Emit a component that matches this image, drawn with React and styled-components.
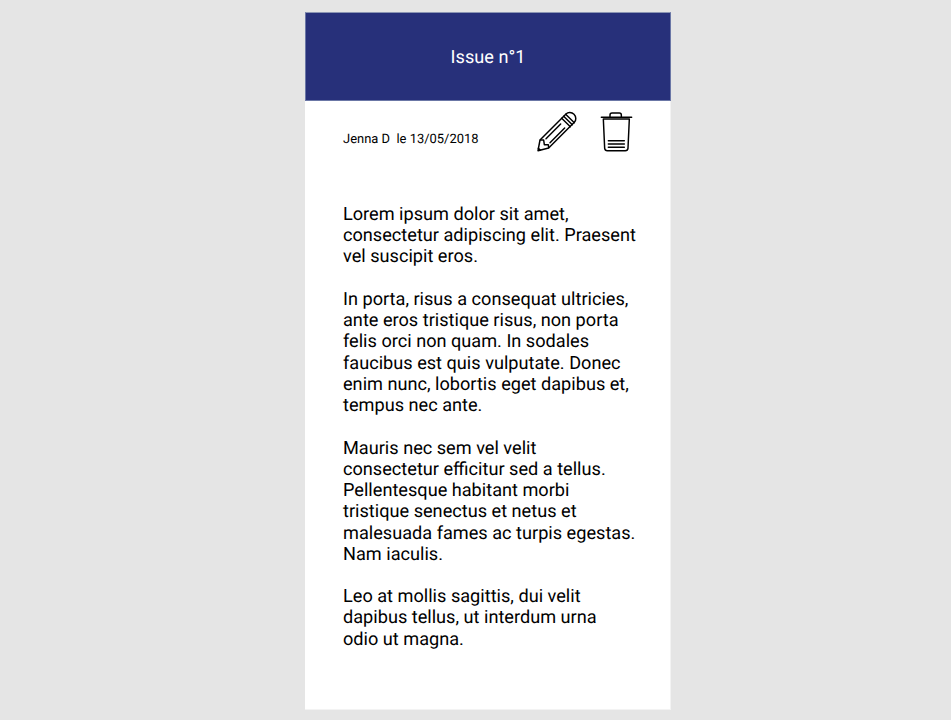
import React from 'react';
import styled, { createGlobalStyle } from 'styled-components';

const GlobalStyle = createGlobalStyle`
  * { box-sizing: border-box; }
  body {
    margin: 0;
    background: #e5e5e5;
    font-family: Roboto, sans-serif;
    color: #000;
    text-rendering: geometricPrecision;
  }
`;

const Page = styled.main`
  height: 720px;
  padding: 12px 0 0 305px;
  overflow: hidden;
`;

const Card = styled.article`
  width: 366px;
  height: 698px;
  background: #fff;
  border: solid #f3f3f3;
  border-width: 0 1px 1px 0;
`;

const Header = styled.header`
  width: 366px;
  height: 89px;
  padding-top: 2px;
  display: flex;
  align-items: center;
  justify-content: center;
  background: #27307a;
  border: 1px solid #6b77a6;
  border-top-color: #8c96b4;
`;

const Title = styled.h1`
  margin: 0;
  color: #fff;
  font-size: 18.15px;
  font-weight: 400;
  line-height: 21px;
`;

const Meta = styled.div`
  height: 103px;
  padding: 4px 25px 0 38px;
  display: flex;
  justify-content: space-between;
`;

const Byline = styled.p`
  margin: 27px 0 0;
  font-size: 12.95px;
  line-height: 16px;
  white-space: pre;
`;

const Actions = styled.div`
  display: flex;
  gap: 5px;
`;

const IconButton = styled.button`
  width: 55px;
  height: 55px;
  padding: 0;
  border: 0;
  background: none;
  color: #000;
`;

const Icon = styled.svg`
  display: block;
  width: 55px;
  height: 55px;
  fill: none;
  stroke: currentColor;
  stroke-width: 4.4;
  stroke-linejoin: round;
  stroke-linecap: round;
`;

const Body = styled.section`
  padding-left: 38px;
  font-size: 18.15px;
  line-height: 21.24px;
`;

const Paragraph = styled.p`
  margin: 0 0 21.24px;
  white-space: pre;
`;

const paragraphs = [
  ['Lorem ipsum dolor sit amet,', 'consectetur adipiscing elit. Praesent', 'vel suscipit eros.'],
  [
    'In porta, risus a consequat ultricies,',
    'ante eros tristique risus, non porta',
    'felis orci non quam. In sodales',
    'faucibus est quis vulputate. Donec',
    'enim nunc, lobortis eget dapibus et,',
    'tempus nec ante.',
  ],
  [
    'Mauris nec sem vel velit',
    'consectetur efficitur sed a tellus.',
    'Pellentesque habitant morbi',
    'tristique senectus et netus et',
    'malesuada fames ac turpis egestas.',
    'Nam iaculis.',
  ],
  ['Leo at mollis sagittis, dui velit', 'dapibus tellus, ut interdum urna', 'odio ut magna.'],
];

const PencilIcon = () => (
  <Icon viewBox="0 0 165 165" aria-hidden="true">
    <path d="M30 105 L108 27 C114 21 125 21 132 28 C139 35 139 46 133 52 L56 129 L24 137 Z" />
    <path d="M31 105 L41 105 L43 119 L55 119 L56 128" />
    <path d="M95 40 L121 65 M101 34 L127 59 M107 28 L133 53" />
    <path d="M48 101 L92 57 M60 113 L104 69" />
    <path d="M25 130 L31 135" />
  </Icon>
);

const TrashIcon = () => (
  <Icon viewBox="0 0 165 165" aria-hidden="true">
    <path d="M34 37 H125" />
    <path d="M60 35 V30 Q60 24 66 24 H88 Q94 24 94 30 V35" />
    <path d="M40 42 L44 130 Q45 137 52 137 H106 Q113 137 114 130 L118 42 Z" />
    <path d="M55 107 H103 M55 117 H103 M55 127 H103" />
  </Icon>
);

export default function App() {
  return (
    <>
      <GlobalStyle />
      <Page>
        <Card>
          <Header>
            <Title>Issue n°1</Title>
          </Header>
          <Meta>
            <Byline>{'Jenna D  le 13/05/2018'}</Byline>
            <Actions>
              <IconButton aria-label="Edit"><PencilIcon /></IconButton>
              <IconButton aria-label="Delete"><TrashIcon /></IconButton>
            </Actions>
          </Meta>
          <Body>
            {paragraphs.map((lines) => (
              <Paragraph key={lines[0]}>{lines.join('\n')}</Paragraph>
            ))}
          </Body>
        </Card>
      </Page>
    </>
  );
}
